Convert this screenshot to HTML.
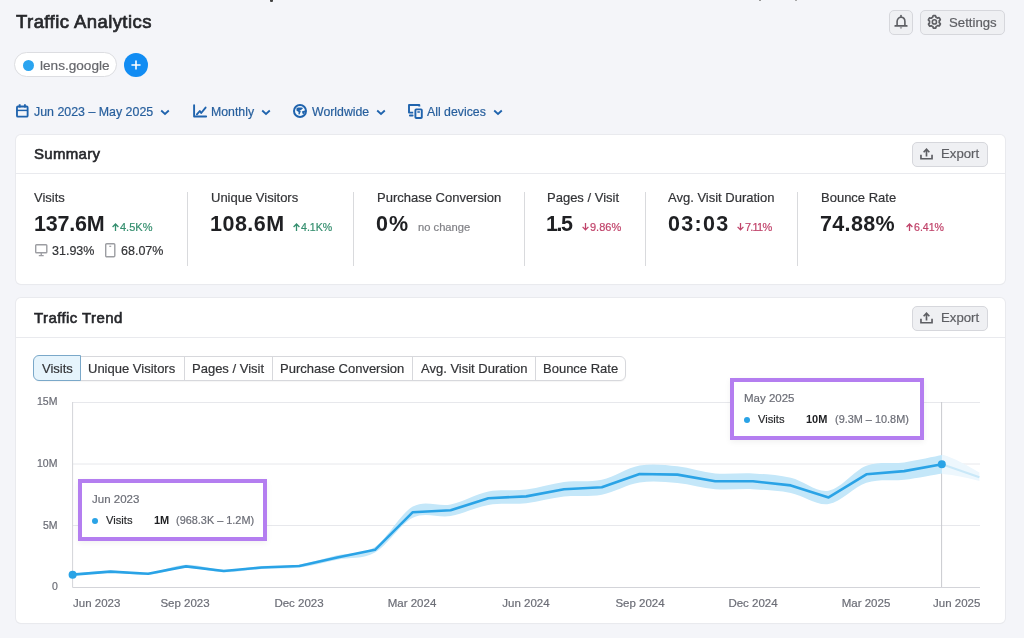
<!DOCTYPE html>
<html><head><meta charset="utf-8">
<style>
*{margin:0;padding:0;box-sizing:border-box}
html,body{width:1024px;height:638px;overflow:hidden;background:#f4f5f9;font-family:"Liberation Sans",sans-serif;color:#222326}
.t{position:absolute;white-space:nowrap;line-height:1;will-change:transform;-webkit-text-stroke:0.2px currentColor}
.card{position:absolute;background:#fff;border-radius:5px;box-shadow:0 0 0 1px #e9eaee,0 1px 1px rgba(0,0,0,0.05)}
.sep{position:absolute;height:1px;background:#e9eaee}
.btn{position:absolute;background:#eff0f3;border:1px solid #d6d7dc;border-radius:5px}
.vdiv{position:absolute;width:1px;background:#d9dadd;top:192px;height:74px}
.tip{position:absolute;border:4.3px solid #b47ef0;background:#fff;box-shadow:0 2px 6px rgba(0,0,0,0.06)}
svg{position:absolute;overflow:visible}
</style></head><body>
<div style="position:absolute;left:270px;top:0;width:2.5px;height:1.5px;border-radius:0 0 1px 1px;background:#444"></div>
<div style="position:absolute;left:759px;top:0;width:2px;height:1px;background:#999"></div>
<div style="position:absolute;left:795px;top:0;width:2px;height:1px;background:#aaa"></div>
<div class="t" style="left:16.30px;top:13px;font-size:18.5px;color:#27282c;letter-spacing:0.43px;-webkit-text-stroke:0.7px #27282c;">Traffic Analytics</div>
<div class="btn" style="left:889px;top:10px;width:24px;height:24.5px"></div>
<svg style="left:894px;top:14px" width="14" height="16" viewBox="0 0 14 16">
  <path d="M3.1 11.9 V7.6 C3.1 4.9 4.8 3.3 7 3.3 C9.2 3.3 10.9 4.9 10.9 7.6 V11.9" fill="none" stroke="#5d5e63" stroke-width="1.6"/>
  <path d="M1.2 11.9 H12.8" stroke="#5d5e63" stroke-width="1.7" stroke-linecap="round"/>
  <path d="M7 1.6 V3.2" stroke="#5d5e63" stroke-width="1.6" stroke-linecap="round"/>
  <path d="M5.6 13.5 H8.4 L7 14.8 Z" fill="#5d5e63"/>
</svg>
<div class="btn" style="left:920px;top:10px;width:85px;height:24.5px"></div>
<svg style="left:927px;top:15px" width="15" height="15" viewBox="0 0 15 15">
  <path d="M7.40,0.60 L7.73,0.61 L8.06,0.63 L8.39,0.68 L8.64,1.08 L8.76,1.83 L8.91,2.24 L9.16,2.33 L9.39,2.42 L9.62,2.53 L9.85,2.66 L10.07,2.79 L10.28,2.94 L10.48,3.09 L10.91,3.00 L11.61,2.69 L12.08,2.68 L12.30,2.94 L12.50,3.20 L12.68,3.47 L12.86,3.75 L13.01,4.04 L13.16,4.34 L13.28,4.64 L13.06,5.06 L12.47,5.54 L12.19,5.88 L12.24,6.13 L12.27,6.39 L12.29,6.64 L12.30,6.90 L12.29,7.16 L12.27,7.41 L12.24,7.67 L12.54,7.99 L13.15,8.44 L13.39,8.85 L13.28,9.16 L13.16,9.46 L13.01,9.76 L12.86,10.05 L12.68,10.33 L12.50,10.60 L12.30,10.86 L11.82,10.88 L11.11,10.61 L10.68,10.54 L10.48,10.71 L10.28,10.86 L10.07,11.01 L9.85,11.14 L9.62,11.27 L9.39,11.38 L9.16,11.47 L9.02,11.89 L8.94,12.65 L8.71,13.06 L8.39,13.12 L8.06,13.17 L7.73,13.19 L7.40,13.20 L7.07,13.19 L6.74,13.17 L6.41,13.12 L6.16,12.72 L6.04,11.97 L5.89,11.56 L5.64,11.47 L5.41,11.38 L5.18,11.27 L4.95,11.14 L4.73,11.01 L4.52,10.86 L4.32,10.71 L3.89,10.80 L3.19,11.11 L2.72,11.12 L2.50,10.86 L2.30,10.60 L2.12,10.33 L1.94,10.05 L1.79,9.76 L1.64,9.46 L1.52,9.16 L1.74,8.74 L2.33,8.26 L2.61,7.92 L2.56,7.67 L2.53,7.41 L2.51,7.16 L2.50,6.90 L2.51,6.64 L2.53,6.39 L2.56,6.13 L2.26,5.81 L1.65,5.36 L1.41,4.95 L1.52,4.64 L1.64,4.34 L1.79,4.04 L1.94,3.75 L2.12,3.47 L2.30,3.20 L2.50,2.94 L2.98,2.92 L3.69,3.19 L4.12,3.26 L4.32,3.09 L4.52,2.94 L4.73,2.79 L4.95,2.66 L5.18,2.53 L5.41,2.42 L5.64,2.33 L5.78,1.91 L5.86,1.15 L6.09,0.74 L6.41,0.68 L6.74,0.63 L7.07,0.61 Z" fill="none" stroke="#5d5e63" stroke-width="1.7" stroke-linejoin="round"/>
  <circle cx="7.4" cy="6.9" r="2.1" fill="none" stroke="#5d5e63" stroke-width="1.6"/>
</svg>
<div class="t" style="left:949.00px;top:16px;font-size:13.2px;color:#5d5e63;">Settings</div>
<div style="position:absolute;left:14px;top:52px;width:103px;height:25px;border:1px solid #dcdde1;border-radius:13px;background:#fff"></div>
<div style="position:absolute;left:23.2px;top:59.6px;width:11px;height:11px;border-radius:50%;background:#2aa4f0"></div>
<div class="t" style="left:40.00px;top:59px;font-size:13.6px;color:#66676c;">lens.google</div>
<div style="position:absolute;left:124px;top:52.7px;width:24.3px;height:24.5px;border-radius:50%;background:#118cf3"></div>
<svg style="left:131px;top:60px" width="10" height="10" viewBox="0 0 10 10"><path d="M5 1 V9 M1 5 H9" stroke="#fff" stroke-width="1.6" stroke-linecap="round"/></svg>
<svg style="left:16.3px;top:104.1px" width="12.6" height="13.6" viewBox="0 0 13 14">
  <rect x="1" y="2.6" width="11" height="10.4" rx="1" fill="none" stroke="#1f63ad" stroke-width="1.9"/>
  <path d="M1 6.6 H12" stroke="#1f63ad" stroke-width="1.5"/>
  <path d="M3.8 0.3 V3.6 M9.2 0.3 V3.6" stroke="#1f63ad" stroke-width="1.9"/>
</svg>
<div class="t" style="left:34.20px;top:106px;font-size:12.4px;color:#275f9d;">Jun 2023 – May 2025</div>
<svg style="left:160px;top:108.8px" width="10" height="7" viewBox="0 0 10 7"><path d="M1.2 1.5 L5 5 L8.8 1.5" fill="none" stroke="#1f63ad" stroke-width="1.8"/></svg>
<svg style="left:192.5px;top:104px" width="15" height="14" viewBox="0 0 15 14">
  <path d="M1.1 1.25 V12.55 H13.15" fill="none" stroke="#1f63ad" stroke-width="1.9" stroke-linecap="round" stroke-linejoin="round"/>
  <path d="M3.9 10.4 L6.8 7.0 L8.2 9.0 L12.6 3.6" fill="none" stroke="#1f63ad" stroke-width="1.9" stroke-linecap="round" stroke-linejoin="round"/>
</svg>
<div class="t" style="left:210.50px;top:106px;font-size:12.3px;color:#275f9d;">Monthly</div>
<svg style="left:260.5px;top:108.8px" width="10" height="7" viewBox="0 0 10 7"><path d="M1.2 1.5 L5 5 L8.8 1.5" fill="none" stroke="#1f63ad" stroke-width="1.8"/></svg>
<svg style="left:293.3px;top:103.9px" width="14" height="14" viewBox="0 0 14 14">
  <circle cx="7" cy="7" r="6" fill="#f2f8fd" stroke="#1f63ad" stroke-width="2"/>
  <path d="M3.6 3.9 C5.5 3.3 8 3.3 10.2 3.9 L7.8 6.2 L6.4 6.3 L7.8 7.3 L6.6 10.6 L5.4 10.2 L5.6 8.0 L3.4 6.6 Z" fill="#1f63ad"/>
  <path d="M8.8 7.4 L12.3 6.2 C12.2 8.0 11.4 9.6 10.0 10.6 Z" fill="#1f63ad"/>
</svg>
<div class="t" style="left:311.60px;top:106px;font-size:12.3px;color:#275f9d;">Worldwide</div>
<svg style="left:375.5px;top:108.8px" width="10" height="7" viewBox="0 0 10 7"><path d="M1.2 1.5 L5 5 L8.8 1.5" fill="none" stroke="#1f63ad" stroke-width="1.8"/></svg>
<svg style="left:408px;top:104px" width="15" height="15" viewBox="0 0 15 15">
  <path d="M11.3 2.6 V1 H1 V8.6 H5.2" fill="none" stroke="#1f63ad" stroke-width="1.9" stroke-linejoin="round"/>
  <path d="M1.9 11.5 H4.6" stroke="#1f63ad" stroke-width="1.9" stroke-linecap="round"/>
  <rect x="7.4" y="5.4" width="6.4" height="8.6" rx="0.8" fill="none" stroke="#1f63ad" stroke-width="1.9"/>
  <path d="M9.9 8.1 H11.3" stroke="#1f63ad" stroke-width="1.5" stroke-linecap="round"/>
</svg>
<div class="t" style="left:426.50px;top:106px;font-size:12.3px;color:#275f9d;">All devices</div>
<svg style="left:492.5px;top:108.8px" width="10" height="7" viewBox="0 0 10 7"><path d="M1.2 1.5 L5 5 L8.8 1.5" fill="none" stroke="#1f63ad" stroke-width="1.8"/></svg>
<div class="card" style="left:16px;top:135px;width:989px;height:149px"></div>
<div class="sep" style="left:16px;top:173px;width:989px"></div>
<div class="t" style="left:34.00px;top:146px;font-size:15px;color:#26272b;letter-spacing:0.3px;-webkit-text-stroke:0.6px #26272b;">Summary</div>
<div class="btn" style="left:912.3px;top:142px;width:75.5px;height:25px"></div>
<svg style="left:920.2px;top:148.3px" width="13" height="12" viewBox="0 0 14 13">
  <path d="M7 9.2 V1.6 M3.9 4.6 L7 1.4 L10.1 4.6" fill="none" stroke="#5d5e63" stroke-width="1.8"/>
  <path d="M1 7.4 V11.6 H13 V7.4" fill="none" stroke="#5d5e63" stroke-width="1.8"/>
</svg>
<div class="t" style="left:941.00px;top:147px;font-size:13.2px;color:#5d5e63;">Export</div>
<div class="t" style="left:34.20px;top:191px;font-size:13px;color:#333437;">Visits</div>
<div class="t" style="left:33.90px;top:214px;font-size:21.5px;color:#1f2023;font-weight:bold;-webkit-text-stroke:0;letter-spacing:-0.2px;">137.6M</div>
<div class="t" style="left:210.70px;top:191px;font-size:13px;color:#333437;">Unique Visitors</div>
<div class="t" style="left:210.40px;top:214px;font-size:21.5px;color:#1f2023;font-weight:bold;-webkit-text-stroke:0;letter-spacing:0.5px;">108.6M</div>
<div class="t" style="left:376.60px;top:191px;font-size:13px;color:#333437;">Purchase Conversion</div>
<div class="t" style="left:376.30px;top:214px;font-size:21.5px;color:#1f2023;font-weight:bold;-webkit-text-stroke:0;letter-spacing:1.0px;">0%</div>
<div class="t" style="left:546.80px;top:191px;font-size:13px;color:#333437;">Pages / Visit</div>
<div class="t" style="left:545.50px;top:214px;font-size:21.5px;color:#1f2023;font-weight:bold;-webkit-text-stroke:0;letter-spacing:-1.5px;">1.5</div>
<div class="t" style="left:668.20px;top:191px;font-size:13px;color:#333437;">Avg. Visit Duration</div>
<div class="t" style="left:667.90px;top:214px;font-size:21.5px;color:#1f2023;font-weight:bold;-webkit-text-stroke:0;letter-spacing:1.3px;">03:03</div>
<div class="t" style="left:820.60px;top:191px;font-size:13px;color:#333437;">Bounce Rate</div>
<div class="t" style="left:820.30px;top:214px;font-size:21.5px;color:#1f2023;font-weight:bold;-webkit-text-stroke:0;letter-spacing:0.35px;">74.88%</div>
<div class="vdiv" style="left:187.2px"></div>
<div class="vdiv" style="left:353.1px"></div>
<div class="vdiv" style="left:523.5px"></div>
<div class="vdiv" style="left:644.7px"></div>
<div class="vdiv" style="left:797.4px"></div>
<svg style="left:111.7px;top:223px" width="7" height="8" viewBox="0 0 7 8"><path d="M3.5 7.9 V1.2 M0.6 4 L3.5 1 L6.4 4" fill="none" stroke="#358f6f" stroke-width="1.3"/></svg>
<div class="t" style="left:120.00px;top:222px;font-size:11px;color:#358f6f;">4.5K%</div>
<svg style="left:292.8px;top:223px" width="7" height="8" viewBox="0 0 7 8"><path d="M3.5 7.9 V1.2 M0.6 4 L3.5 1 L6.4 4" fill="none" stroke="#358f6f" stroke-width="1.3"/></svg>
<div class="t" style="left:301.30px;top:222px;font-size:10.6px;color:#358f6f;">4.1K%</div>
<div class="t" style="left:418.10px;top:222px;font-size:11.2px;color:#808186;">no change</div>
<svg style="left:581.7px;top:223px" width="7" height="8" viewBox="0 0 7 8"><path d="M3.5 0 V6.7 M0.6 3.9 L3.5 6.9 L6.4 3.9" fill="none" stroke="#c0436a" stroke-width="1.3"/></svg>
<div class="t" style="left:590.00px;top:222px;font-size:11px;color:#c0436a;">9.86%</div>
<svg style="left:736.8px;top:223px" width="7" height="8" viewBox="0 0 7 8"><path d="M3.5 0 V6.7 M0.6 3.9 L3.5 6.9 L6.4 3.9" fill="none" stroke="#c0436a" stroke-width="1.3"/></svg>
<div class="t" style="left:745.00px;top:222px;font-size:11px;color:#c0436a;letter-spacing:-0.8px;">7.11%</div>
<svg style="left:905.5px;top:223px" width="7" height="8" viewBox="0 0 7 8"><path d="M3.5 7.9 V1.2 M0.6 4 L3.5 1 L6.4 4" fill="none" stroke="#c0436a" stroke-width="1.3"/></svg>
<div class="t" style="left:913.50px;top:222px;font-size:10.6px;color:#c0436a;">6.41%</div>
<svg style="left:34.5px;top:244px" width="12.5" height="12.5" viewBox="0 0 12.5 12.5">
  <rect x="0.7" y="0.7" width="11.1" height="8" rx="0.8" fill="none" stroke="#9c9da2" stroke-width="1.4"/>
  <path d="M3.8 11.6 H8.7 M6.25 9 V11.4" stroke="#9c9da2" stroke-width="1.3"/>
</svg>
<div class="t" style="left:52.00px;top:245px;font-size:12.5px;color:#333437;">31.93%</div>
<svg style="left:104.5px;top:243px" width="10.5" height="14.5" viewBox="0 0 10.5 14.5">
  <rect x="0.7" y="0.7" width="9.1" height="13.1" rx="1" fill="none" stroke="#9c9da2" stroke-width="1.4"/>
  <path d="M4.3 3.3 H6.2" stroke="#9c9da2" stroke-width="1.2"/>
</svg>
<div class="t" style="left:120.70px;top:245px;font-size:12.5px;color:#333437;">68.07%</div>
<div class="card" style="left:16px;top:298px;width:989px;height:325px"></div>
<div class="sep" style="left:16px;top:337px;width:989px"></div>
<div class="t" style="left:34.20px;top:310px;font-size:15px;color:#26272b;letter-spacing:0.42px;-webkit-text-stroke:0.6px #26272b;">Traffic Trend</div>
<div class="btn" style="left:912.3px;top:306px;width:75.5px;height:25px"></div>
<svg style="left:920.2px;top:312.3px" width="13" height="12" viewBox="0 0 14 13">
  <path d="M7 9.2 V1.6 M3.9 4.6 L7 1.4 L10.1 4.6" fill="none" stroke="#5d5e63" stroke-width="1.8"/>
  <path d="M1 7.4 V11.6 H13 V7.4" fill="none" stroke="#5d5e63" stroke-width="1.8"/>
</svg>
<div class="t" style="left:941.00px;top:311px;font-size:13.2px;color:#5d5e63;">Export</div>
<div style="position:absolute;left:33.5px;top:355.5px;width:592px;height:25px;border:1px solid #d7d8dc;border-radius:6px;background:#fff;box-shadow:0 1px 1px rgba(0,0,0,0.04)"></div>
<div style="position:absolute;left:33px;top:355px;width:48px;height:25.5px;border:1.5px solid #7aa8c9;border-radius:6px 0 0 6px;background:#e6f4fc"></div>
<div style="position:absolute;left:183.7px;top:357px;width:1px;height:22.5px;background:#d7d8dc"></div>
<div style="position:absolute;left:271.8px;top:357px;width:1px;height:22.5px;background:#d7d8dc"></div>
<div style="position:absolute;left:412.3px;top:357px;width:1px;height:22.5px;background:#d7d8dc"></div>
<div style="position:absolute;left:535.1px;top:357px;width:1px;height:22.5px;background:#d7d8dc"></div>
<div class="t" style="left:41.80px;top:362px;font-size:13px;color:#333437;">Visits</div>
<div class="t" style="left:88.00px;top:362px;font-size:13px;color:#333437;">Unique Visitors</div>
<div class="t" style="left:192.00px;top:362px;font-size:13px;color:#333437;">Pages / Visit</div>
<div class="t" style="left:280.00px;top:362px;font-size:13px;color:#333437;">Purchase Conversion</div>
<div class="t" style="left:420.50px;top:362px;font-size:13px;color:#333437;">Avg. Visit Duration</div>
<div class="t" style="left:543.00px;top:362px;font-size:13px;color:#333437;">Bounce Rate</div>
<svg style="left:0;top:0" width="1024" height="638">
  <defs><filter id="bl" x="-5%" y="-20%" width="110%" height="140%"><feGaussianBlur stdDeviation="0.7"/></filter></defs>
  <path d="M73 402.5 H980 M73 464 H980 M73 525.5 H980" stroke="#e7e8ec" stroke-width="1"/>
  <path d="M72.6 402 V587.5 H980" fill="none" stroke="#d3d4d9" stroke-width="1"/>
  <path d="M941.6 402 V587" stroke="#c9cacf" stroke-width="1"/>
  <path d="M72.6,573.6 C78.9,573.1 97.8,570.6 110.4,570.4 C123.0,570.3 135.6,573.7 148.2,572.8 C160.8,571.9 173.4,565.3 186.0,564.8 C198.6,564.3 211.2,569.6 223.8,569.8 C236.4,570.0 249.0,566.9 261.6,566.0 C274.2,565.1 286.8,566.2 299.4,564.4 C312.0,562.6 324.6,558.2 337.2,555.3 C349.8,552.4 362.4,555.1 375.0,547.0 C387.6,538.9 400.2,513.7 412.8,506.6 C425.4,499.5 438.0,507.0 450.6,504.5 C463.2,502.0 475.8,494.0 488.4,491.5 C501.0,489.0 513.6,491.2 526.2,489.6 C538.8,488.0 551.4,483.6 564.0,482.0 C576.6,480.3 589.2,482.4 601.8,479.7 C614.4,477.0 627.0,467.8 639.6,465.5 C652.2,463.3 664.8,464.9 677.4,466.2 C690.0,467.5 702.6,472.2 715.2,473.4 C727.8,474.6 740.4,472.6 753.0,473.4 C765.6,474.1 778.2,474.9 790.8,477.8 C803.4,480.7 816.0,492.7 828.6,490.7 C841.2,488.7 853.8,470.6 866.4,465.8 C879.0,461.1 891.6,464.2 904.2,462.4 C916.8,460.6 935.7,456.3 942.0,455.1 L942.0,473.5 C935.7,474.6 916.8,478.3 904.2,479.8 C891.6,481.3 879.0,478.7 866.4,482.8 C853.8,486.8 841.2,502.4 828.6,504.1 C816.0,505.8 803.4,495.5 790.8,493.0 C778.2,490.5 765.6,489.9 753.0,489.2 C740.4,488.6 727.8,490.3 715.2,489.2 C702.6,488.2 690.0,484.2 677.4,483.0 C664.8,481.9 652.2,480.5 639.6,482.5 C627.0,484.4 614.4,492.3 601.8,494.7 C589.2,497.1 576.6,495.2 564.0,496.6 C551.4,498.1 538.8,501.8 526.2,503.2 C513.6,504.6 501.0,502.7 488.4,504.9 C475.8,507.0 463.2,513.9 450.6,516.1 C438.0,518.2 425.4,511.7 412.8,517.8 C400.2,523.9 387.6,545.6 375.0,552.6 C362.4,559.6 349.8,557.2 337.2,559.7 C324.6,562.2 312.0,566.0 299.4,567.6 C286.8,569.1 274.2,568.2 261.6,569.0 C249.0,569.7 236.4,572.4 223.8,572.2 C211.2,572.0 198.6,567.5 186.0,568.0 C173.4,568.4 160.8,574.0 148.2,574.8 C135.6,575.6 123.0,572.6 110.4,572.8 C97.8,572.9 78.9,575.1 72.6,575.6 Z" fill="#c4e7f9" filter="url(#bl)"/>
  <path d="M942,454.5 C955,458 968,466 979.4,472.5 L979.4,481 C968,478 955,475 942,474 Z" fill="#edf7fd" filter="url(#bl)"/>
  <path d="M942 464.3 L979.4 477.2" stroke="#c9e8f8" stroke-width="2" fill="none"/>
  <polyline points="72.6,574.6 110.4,571.6 148.2,573.8 186.0,566.4 223.8,571.0 261.6,567.5 299.4,566.0 337.2,557.5 375.0,549.8 412.8,512.2 450.6,510.3 488.4,498.2 526.2,496.4 564.0,489.3 601.8,487.2 639.6,474.0 677.4,474.6 715.2,481.3 753.0,481.3 790.8,485.4 828.6,497.4 866.4,474.3 904.2,471.1 942.0,464.3" fill="none" stroke="#2aa3e6" stroke-width="2.6" stroke-linejoin="round" stroke-linecap="round"/>
  <circle cx="72.6" cy="574.8" r="4" fill="#2aa3e6"/>
  <circle cx="941.8" cy="464.3" r="4" fill="#2aa3e6"/>
</svg>
<div class="t" style="right:966.60px;top:396px;font-size:10.5px;color:#6b6d76;">15M</div>
<div class="t" style="right:966.60px;top:458px;font-size:10.5px;color:#6b6d76;">10M</div>
<div class="t" style="right:966.60px;top:520px;font-size:10.5px;color:#6b6d76;">5M</div>
<div class="t" style="right:966.60px;top:581px;font-size:10.5px;color:#6b6d76;">0</div>
<div class="t" style="left:185.40px;top:598px;font-size:11.5px;color:#6b6d76;transform:translateX(-50%);">Sep 2023</div>
<div class="t" style="left:299.10px;top:598px;font-size:11.5px;color:#6b6d76;transform:translateX(-50%);">Dec 2023</div>
<div class="t" style="left:412.30px;top:598px;font-size:11.5px;color:#6b6d76;transform:translateX(-50%);">Mar 2024</div>
<div class="t" style="left:526.00px;top:598px;font-size:11.5px;color:#6b6d76;transform:translateX(-50%);">Jun 2024</div>
<div class="t" style="left:639.50px;top:598px;font-size:11.5px;color:#6b6d76;transform:translateX(-50%);">Sep 2024</div>
<div class="t" style="left:753.00px;top:598px;font-size:11.5px;color:#6b6d76;transform:translateX(-50%);">Dec 2024</div>
<div class="t" style="left:866.30px;top:598px;font-size:11.5px;color:#6b6d76;transform:translateX(-50%);">Mar 2025</div>
<div class="t" style="left:72.70px;top:598px;font-size:11.5px;color:#6b6d76;">Jun 2023</div>
<div class="t" style="right:44.00px;top:598px;font-size:11.5px;color:#6b6d76;">Jun 2025</div>
<div class="tip" style="left:78.2px;top:478.6px;width:189px;height:62px"></div>
<div class="t" style="left:91.50px;top:494px;font-size:11.5px;color:#6b6d76;">Jun 2023</div>
<div style="position:absolute;left:91.5px;top:517.6px;width:6.5px;height:6.5px;border-radius:50%;background:#2aa3e6"></div>
<div class="t" style="left:106.00px;top:515px;font-size:11.2px;color:#2a2b2e;">Visits</div>
<div class="t" style="left:154.00px;top:515px;font-size:11px;color:#1f2023;font-weight:bold;-webkit-text-stroke:0;">1M</div>
<div class="t" style="left:176.20px;top:515px;font-size:10.9px;color:#6b6d76;">(968.3K – 1.2M)</div>
<div class="tip" style="left:730.4px;top:377.6px;width:193.2px;height:62px"></div>
<div class="t" style="left:743.70px;top:393px;font-size:11.5px;color:#6b6d76;">May 2025</div>
<div style="position:absolute;left:743.6999999999999px;top:416.6px;width:6.5px;height:6.5px;border-radius:50%;background:#2aa3e6"></div>
<div class="t" style="left:758.20px;top:414px;font-size:11.2px;color:#2a2b2e;">Visits</div>
<div class="t" style="left:806.10px;top:414px;font-size:11px;color:#1f2023;font-weight:bold;-webkit-text-stroke:0;">10M</div>
<div class="t" style="left:835.40px;top:414px;font-size:10.9px;color:#6b6d76;">(9.3M – 10.8M)</div>
</body></html>
